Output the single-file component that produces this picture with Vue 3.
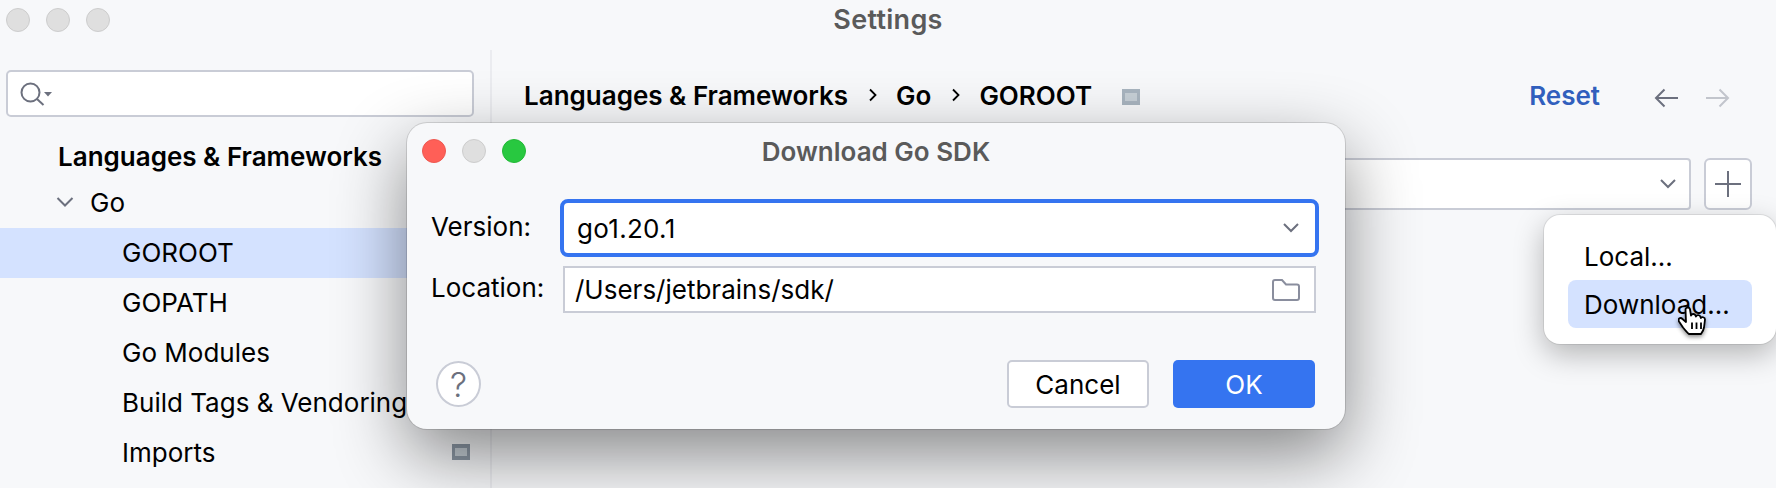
<script setup>
const items = ['GOROOT', 'GOPATH', 'Go Modules', 'Build Tags & Vendoring', 'Imports']
</script>

<template>
  <div class="window">
    <header class="titlebar">
      <div class="lights">
        <span class="light"></span><span class="light"></span><span class="light"></span>
      </div>
      <span class="win-title">Settings</span>
    </header>
    <div class="body">
      <aside class="sidebar">
        <div class="search">
          <svg width="33" height="28" viewBox="0 0 33 28" fill="none" stroke="#6c707e" stroke-width="2">
            <circle cx="10.500" cy="12.500" r="9" />
            <path d="M17 19l6.500 6" />
            <path d="M24 12h8l-4 4.500z" fill="#6c707e" stroke="none" />
          </svg>
        </div>
        <div class="group">Languages &amp; Frameworks</div>
        <div class="go-row">
          <svg width="18" height="12" viewBox="0 0 18 12" fill="none" stroke="#6c707e" stroke-width="2">
            <path d="M1.500 2l7.500 7.500 7.500-7.500" />
          </svg>
          <span>Go</span>
        </div>
        <ul class="tree">
          <li v-for="(it, i) in items" :key="it" class="tree-item" :class="{ sel: i === 0 }">
            <span>{{ it }}</span>
            <svg v-if="it === 'Imports'" class="proj" width="18" height="16" viewBox="0 0 18 16">
              <path fill="#8d99a6" fill-rule="evenodd" d="M0 0h18v16H0zM3 4v8h12V4z" />
              <rect x="3" y="4" width="12" height="8" fill="#c6cfd6" />
            </svg>
          </li>
        </ul>
      </aside>
      <main class="content">
        <div class="crumbs-row">
          <div class="crumbs">
            <span>Languages &amp; Frameworks</span>
            <svg class="sep" width="10" height="16" viewBox="0 0 10 16" fill="none" stroke="#000" stroke-width="1.800"><path d="M2 2.500l5.500 5.500-5.500 5.500" /></svg>
            <span>Go</span>
            <svg class="sep" width="10" height="16" viewBox="0 0 10 16" fill="none" stroke="#000" stroke-width="1.800"><path d="M2 2.500l5.500 5.500-5.500 5.500" /></svg>
            <span>GOROOT</span>
            <svg class="proj2" width="18" height="16" viewBox="0 0 18 16">
              <path fill="#a8b4bf" fill-rule="evenodd" d="M0 0h18v16H0zM3 4v8h12V4z" />
              <rect x="3" y="4" width="12" height="8" fill="#c6cfd6" />
            </svg>
          </div>
          <a class="reset">Reset</a>
          <svg class="arrow" width="24" height="20" viewBox="0 0 24 20" fill="none" stroke="#6c707e" stroke-width="2"><path d="M24 10H2M10.500 1.500L2 10l8.500 8.500" /></svg>
          <svg class="arrow fwd" width="24" height="20" viewBox="0 0 24 20" fill="none" stroke="#c2c5cc" stroke-width="2"><path d="M0 10h22M13.500 1.500L22 10l-8.500 8.500" /></svg>
        </div>
        <div class="sdk-row">
          <div class="sdk-combo">
            <svg width="16" height="10" viewBox="0 0 16 10" fill="none" stroke="#6c707e" stroke-width="2"><path d="M1 1l7 7 7-7" /></svg>
          </div>
          <button class="plus">
            <svg width="26" height="26" viewBox="0 0 26 26" stroke="#6c707e" stroke-width="2"><path d="M0 13h26M13 0v26" /></svg>
          </button>
        </div>
      </main>
    </div>

    <section class="dialog">
      <header class="dlg-head">
        <div class="lights">
          <span class="light red"></span><span class="light"></span><span class="light green"></span>
        </div>
        <span class="dlg-title">Download Go SDK</span>
      </header>
      <div class="form">
        <label>Version:</label>
        <div class="field focus">
          <span class="ver">go1.20.1</span>
          <svg width="16" height="10" viewBox="0 0 16 10" fill="none" stroke="#6c707e" stroke-width="2"><path d="M1 1l7 7 7-7" /></svg>
        </div>
        <label>Location:</label>
        <div class="field plain">
          <span>/Users/jetbrains/sdk/</span>
          <svg width="28" height="24" viewBox="0 0 28 24" fill="none" stroke="#8a8e9e" stroke-width="2"><path d="M1 20V4a2 2 0 0 1 2-2h7l4 4.500h11a2 2 0 0 1 2 2V20a2 2 0 0 1-2 2H3a2 2 0 0 1-2-2z" /></svg>
        </div>
      </div>
      <footer class="dlg-foot">
        <button class="help">?</button>
        <button class="btn cancel">Cancel</button>
        <button class="btn ok">OK</button>
      </footer>
    </section>

    <div class="popup">
      <div class="pop-item">Local...</div>
      <div class="pop-item hot">Download...</div>
      <svg class="hand" width="30" height="29" viewBox="0 0 30 29">
        <path d="M7.500 2.500c0-2.500 4.500-2.500 4.500 0l1 6c.5-2 4-2 4.500 0l.5 1c.5-2 4-2 4.500.5l.5 1c.5-1.500 4-1 4 1.500l-1 8c-.5 3-2 5-3 6.500H11c-2-1.500-4-4-6-6.500L1 14.500c-1.500-3 1.500-4.500 3.500-2.500L8 15z" fill="#fff" stroke="#000" stroke-width="1.800" stroke-linejoin="round" />
        <path d="M14 15.500v6.500M18.500 15.500v6.500M23 15.500v6.500" stroke="#000" stroke-width="1.800" />
      </svg>
    </div>
  </div>
</template>

<style>
html, body { margin: 0; background: #f7f8fa; }
</style>

<style scoped>
.window {
  position: relative;
  width: 1776px;
  height: 488px;
  overflow: hidden;
  background: #f7f8fa;
  color: #000;
  font-family: Inter, "Liberation Sans", sans-serif;
  font-size: 26px;
}
.titlebar {
  height: 40px;
  display: flex;
  align-items: center;
  justify-content: center;
  position: relative;
}
.lights {
  position: absolute;
  left: 6px;
  top: 8px;
  display: flex;
  gap: 16px;
}
.light {
  width: 24px;
  height: 24px;
  box-sizing: border-box;
  border-radius: 50%;
  background: #dfdfdf;
  border: 1px solid #cdcdcd;
}
.light.red { background: #ff5f57; border-color: #ee5850; }
.light.green { background: #28c840; border-color: #22b936; }
.win-title {
  font-size: 27px;
  letter-spacing: .3px;
  font-weight: 600;
  color: #5a5a5a;
  margin-top: -2px;
}
.body {
  display: flex;
  height: 448px;
}
.sidebar {
  width: 490px;
  box-sizing: border-box;
  padding-top: 30px;
  flex: none;
}
.search {
  width: 468px;
  height: 47px;
  margin-left: 6px;
  box-sizing: border-box;
  background: #fff;
  border: 2px solid #c9ccd6;
  border-radius: 5px;
  display: flex;
  align-items: center;
  padding-left: 12px;
}
.group {
  font-weight: 600;
  line-height: 50px;
  margin-top: 15px;
  padding-left: 58px;
}
.go-row {
  display: flex;
  align-items: center;
  height: 40px;
  padding-left: 56px;
  gap: 16px;
}
.tree {
  list-style: none;
  margin: 6px 0 0;
  padding: 0;
}
.tree-item {
  height: 50px;
  box-sizing: border-box;
  padding: 0 20px 2px 122px;
  display: flex;
  align-items: center;
  justify-content: space-between;
}
.tree-item.sel { background: #d4e2ff; }
.content {
  flex: 1;
  min-width: 0;
  box-sizing: border-box;
  border-left: 2px solid #ebecf0;
  margin-top: 10px;
  padding: 0 46px 0 32px;
}
.crumbs-row {
  display: flex;
  align-items: center;
  height: 44px;
  margin-top: 23px;
}
.crumbs {
  display: flex;
  align-items: center;
  font-weight: 600;
  flex: 1;
}
.sep { margin: 0 18px 0 20px; }
.proj2 { margin: 4px 0 0 30px; }
.reset {
  color: #315fbd;
  font-weight: 600;
  margin-right: 54px;
}
.arrow { margin-top: 6px; }
.fwd { margin-left: 28px; }
.sdk-row {
  display: flex;
  justify-content: flex-end;
  gap: 13px;
  margin-top: 41px;
  height: 52px;
  margin-right: -22px;
}
.sdk-combo {
  flex: 1;
  box-sizing: border-box;
  background: #fff;
  border: 2px solid #c9ccd6;
  border-radius: 4px;
  display: flex;
  align-items: center;
  justify-content: flex-end;
  padding-right: 13px;
}
.plus {
  width: 48px;
  padding: 0;
  box-sizing: border-box;
  background: #fff;
  border: 2px solid #c9ccd6;
  border-radius: 6px;
  display: flex;
  align-items: center;
  justify-content: center;
}
.dialog {
  position: absolute;
  left: 407px;
  top: 123px;
  width: 938px;
  height: 306px;
  box-sizing: border-box;
  background: #f7f8fa;
  border-radius: 20px;
  box-shadow: 0 0 0 1px rgba(0, 0, 0, .12), 0 26px 70px rgba(0, 0, 0, .46);
}
.dlg-head {
  height: 56px;
  display: flex;
  align-items: center;
  justify-content: center;
  position: relative;
}
.dlg-head .lights { left: 15px; top: 16px; }
.dlg-title {
  font-weight: 600;
  color: #5a5a5a;
}
.form {
  display: grid;
  grid-template-columns: 126px 1fr;
  grid-template-rows: 58px 47px;
  row-gap: 9px;
  align-items: center;
  margin-top: 20px;
  padding-left: 24px;
  padding-right: 26px;
}
.form label { margin-top: -4px; }
.field {
  box-sizing: border-box;
  background: #fff;
  display: flex;
  align-items: center;
  justify-content: space-between;
}
.ver { letter-spacing: .3px; }
.field.focus {
  height: 58px;
  margin-left: 3px;
  border: 4px solid #3574f0;
  border-radius: 8px;
  padding: 0 16px 0 13px;
}
.field.plain {
  height: 47px;
  margin-left: 6px;
  margin-right: 3px;
  border: 2px solid #c9ccd6;
  padding: 0 14px 0 10px;
}
.dlg-foot {
  display: flex;
  align-items: center;
  margin-top: 47px;
  padding: 0 30px 0 29px;
  gap: 24px;
}
.help {
  width: 45px;
  height: 46px;
  padding: 0;
  box-sizing: border-box;
  border-radius: 50%;
  background: #fff;
  border: 2px solid #c9ccd6;
  color: #6c707e;
  font: 300 34px Inter, sans-serif;
  margin-right: auto;
}
.btn {
  width: 142px;
  height: 48px;
  box-sizing: border-box;
  padding: 0;
  border-radius: 5px;
  font: 26px Inter, sans-serif;
}
.cancel { background: #fff; border: 2px solid #c9ccd6; color: #000; }
.ok { background: #3574f0; border: 0; color: #fff; }
.popup {
  position: absolute;
  left: 1544px;
  top: 215px;
  width: 232px;
  height: 129px;
  box-sizing: border-box;
  padding: 17px 24px 16px 24px;
  background: #fff;
  border-radius: 16px;
  box-shadow: 0 0 0 1px rgba(0, 0, 0, .08), 0 10px 30px rgba(0, 0, 0, .28);
  display: flex;
  flex-direction: column;
}
.pop-item {
  height: 48px;
  display: flex;
  align-items: center;
  padding-left: 16px;
  border-radius: 8px;
}
.hot { background: #d4e2ff; }
.hand {
  position: absolute;
  left: 134px;
  top: 92px;
  filter: drop-shadow(0 2px 2px rgba(0, 0, 0, .45));
}
</style>
